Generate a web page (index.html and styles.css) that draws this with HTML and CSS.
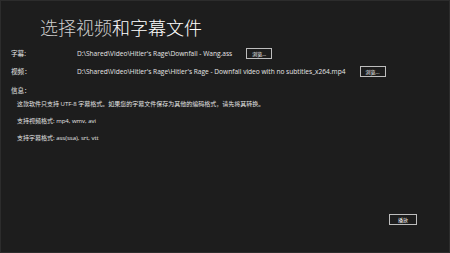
FILE: index.html
```html
<!DOCTYPE html>
<html>
<head>
<meta charset="utf-8">
<link rel="stylesheet" href="styles.css">
</head>
<body>
<div class="win">
  <h1 class="title"><span class="dim">选择视频</span>和字幕文件</h1>
  <div class="row r1">
    <span class="label">字幕:</span>
    <span class="path">D:\Shared\Video\Hitler's Rage\Downfall - Wang.ass</span>
    <span class="btn">浏览...</span>
  </div>
  <div class="row r2">
    <span class="label">视频：</span>
    <span class="path">D:\Shared\Video\Hitler's Rage\Hitler's Rage - Downfall video with no subtitles_x264.mp4</span>
    <span class="btn">浏览...</span>
  </div>
  <div class="info">信息：</div>
  <div class="lines">
    <p>这款软件只支持 UTF-8 字幕格式。如果您的字幕文件保存为其他的编码格式，请先将其转换。</p>
    <p>支持视频格式: mp4, wmv, avi</p>
    <p>支持字幕格式: ass(ssa), srt, vtt</p>
  </div>
  <div class="footer"><span class="btn play">播放</span></div>
</div>
</body>
</html>
```
FILE: styles.css
```css
html, body { margin: 0; padding: 0; }
body { background: #1d1d1d; width: 450px; height: 253px; overflow: hidden; font-family: "Open Sans", "Noto Sans CJK SC", sans-serif; color: #e6e6e6; }
.win { box-sizing: border-box; width: 450px; height: 253px; border: 1px solid #2c2c2c; display: flex; flex-direction: column; }
.title { margin: 15px 0 0 39px; font-weight: 300; font-size: 18px; line-height: 22px; color: #fff; font-family: "Noto Sans CJK SC", sans-serif; }
.title .dim { color: #cfcfcf; }
.row { display: flex; align-items: center; font-size: 6.6px; height: 12px; }
.r1 { margin-top: 9px; }
.r2 { margin-top: 6px; }
.label { width: 66px; padding-left: 10px; flex: none; }
.path { white-space: nowrap; }
.btn { display: inline-flex; align-items: center; justify-content: center; box-sizing: border-box; height: 11px; width: 26px; border: 1px solid #bdbdbd; font-size: 5px; color: #fff; margin-left: 14px; }
.info { font-size: 6.5px; margin: 8px 0 0 10px; }
.lines { margin-left: 16px; font-size: 6px; }
.lines p { margin: 0; line-height: 17px; }
.lines p:first-child { margin-top: 1px; }
.footer { flex: 1; display: flex; justify-content: flex-end; align-items: flex-end; padding: 0 32px 27px 0; }
.play { margin-left: 0; width: 28px; height: 11px; }
```
